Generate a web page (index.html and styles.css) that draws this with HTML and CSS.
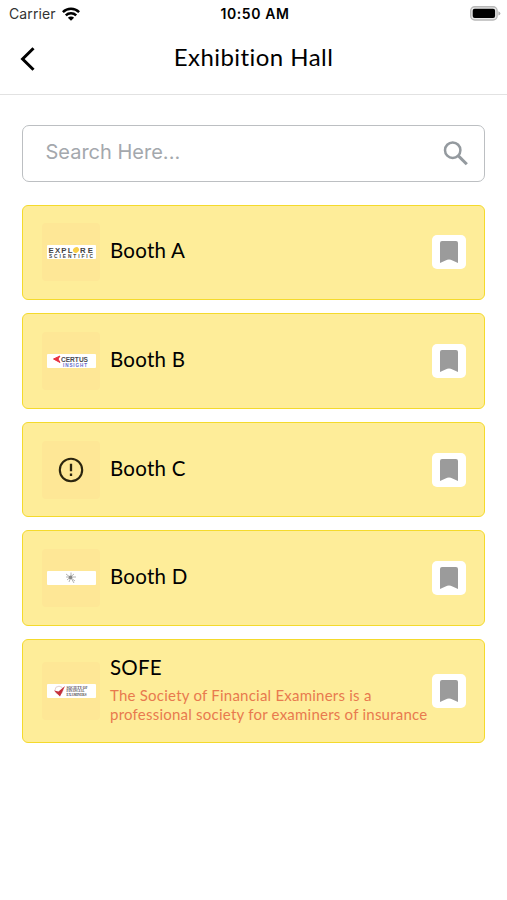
FILE: index.html
```
<!DOCTYPE html>
<html lang="en">
<head>
    <meta charset="UTF-8">
    <meta name="viewport" content="width=device-width, initial-scale=1">
    <title>Exhibition Hall</title>
    <link rel="stylesheet" href="styles.css">
</head>
<body>
<svg class="symbols" width="0" height="0">
    <symbol id="bookmark" viewBox="0 0 18 22">
        <path d="M2 0h14a2 2 0 0 1 2 2v20l-5.5-2.5q-3.500-1.800-7 0L0 22V2a2 2 0 0 1 2-2z" fill="#9b9b9b"/>
    </symbol>
</svg>
<div class="status-bar">
    <div class="carrier">
        <span>Carrier</span>
        <svg width="18" height="14" viewBox="0 0 18 14">
            <g fill="none" stroke="#000" stroke-width="2.5">
                <path d="M.9 5.1a11.6 11.6 0 0 1 16.2 0"/>
                <path d="M3.8 8.3a7.4 7.4 0 0 1 10.4 0"/>
            </g>
            <path d="M9 13.8L5.9 10.7a4.4 4.4 0 0 1 6.2 0z"/>
        </svg>
    </div>
    <span class="time">10:50 AM</span>
    <div class="battery">
        <svg width="31" height="15" viewBox="0 0 31 15">
            <rect x=".7" y=".8" width="26.4" height="13.2" rx="4" fill="#e8e8e8" stroke="#b8b8b8" stroke-width="1.4"/>
            <rect x="2.7" y="2.7" width="22.4" height="9.4" rx="2" fill="#000"/>
            <path d="M28.4 5.2q2 .8 2 2.2t-2 2.2z" fill="#b0b0b0"/>
        </svg>
    </div>
</div>
<div class="header">
    <a class="back" href="#">
        <svg width="16" height="24" viewBox="0 0 16 24">
            <path d="M13.5 1.2L2.6 12l10.9 10.8" fill="none" stroke="#000" stroke-width="3"/>
        </svg>
    </a>
    <h1>Exhibition Hall</h1>
</div>
<div class="content">
    <div class="search-box">
        <span class="text">Search Here...</span>
        <svg width="25" height="25" viewBox="0 0 25 25" fill="none" stroke="#949a9f">
            <circle cx="9.7" cy="9.2" r="7.7" stroke-width="2.5"/>
            <path d="M15.4 14.9l8.4 8.4" stroke-width="3"/>
        </svg>
    </div>
    <ul class="booth-list">
        <li class="booth">
            <div class="thumb">
                <svg width="49" height="14" viewBox="0 0 49 14">
                    <rect width="49" height="14" rx="1" fill="#fff"/>
                    <g font-family="Liberation Sans" font-weight="bold" fill="#444">
                        <text x="1.5" y="7.7" font-size="7.8" textLength="24" lengthAdjust="spacing">EXPL</text>
                        <text x="33" y="7.7" font-size="7.8" textLength="13" lengthAdjust="spacing">RE</text>
                        <text x="2" y="12.7" font-size="4.8" textLength="44" lengthAdjust="spacing">SCIENTIFIC</text>
                    </g>
                    <ellipse cx="29" cy="5" rx="3.2" ry="2.6" fill="#f8cf48" transform="rotate(-35 29 5)"/>
                </svg>
            </div>
            <div class="info"><h2>Booth A</h2></div>
            <button class="mark"><svg width="18" height="22"><use href="#bookmark"/></svg></button>
        </li>
        <li class="booth">
            <div class="thumb">
                <svg width="49" height="14" viewBox="0 0 49 14">
                    <rect width="49" height="14" rx="1" fill="#fff"/>
                    <path d="M13 2L6.500 5 13 8.500l-2-3.500z" fill="#e8303f" stroke="#e8303f"/>
                    <g font-family="Liberation Sans" font-weight="bold">
                        <text x="14" y="7.600" font-size="6.600" fill="#4a4a50" textLength="27" lengthAdjust="spacingAndGlyphs">CERTUS</text>
                        <text x="16" y="12.800" font-size="4.600" fill="#6268c8" textLength="24" lengthAdjust="spacing">INSIGHT</text>
                    </g>
                </svg>
            </div>
            <div class="info"><h2>Booth B</h2></div>
            <button class="mark"><svg width="18" height="22"><use href="#bookmark"/></svg></button>
        </li>
        <li class="booth">
            <div class="thumb">
                <svg width="26" height="26" viewBox="0 0 26 26">
                    <circle cx="13" cy="13" r="11.2" fill="none" stroke="#2b250f" stroke-width="2.1"/>
                    <path d="M13 6.8v7.4M13 16.6v2.500" stroke="#2b250f" stroke-width="2.300"/>
                </svg>
            </div>
            <div class="info"><h2>Booth C</h2></div>
            <button class="mark"><svg width="18" height="22"><use href="#bookmark"/></svg></button>
        </li>
        <li class="booth">
            <div class="thumb">
                <svg width="49" height="14" viewBox="0 0 49 14">
                    <rect width="49" height="14" rx="1" fill="#fff"/>
                    <g stroke="#aaa" stroke-width=".9">
                        <path d="M19 3l9 7M20 9l7-6M24 1.500v5M22 11l2-5M19 6h10M27 12l-3-5"/>
                        <circle cx="23.500" cy="6.400" r="1.800" fill="#888" stroke="none"/>
                    </g>
                </svg>
            </div>
            <div class="info"><h2>Booth D</h2></div>
            <button class="mark"><svg width="18" height="22"><use href="#bookmark"/></svg></button>
        </li>
        <li class="booth tall">
            <div class="thumb">
                <svg width="49" height="14" viewBox="0 0 49 14">
                    <rect width="49" height="14" rx="1" fill="#fff"/>
                    <circle cx="12" cy="6.2" r="4" fill="none" stroke="#dcc3c3" stroke-width=".8"/>
                    <path d="M7 6.500l4.500 1L18 2l-5 10.500z" fill="#c5303b"/>
                    <g font-family="Liberation Serif" font-weight="bold" font-size="4.2" fill="#49404a">
                        <text x="19.500" y="4.600" textLength="21" lengthAdjust="spacingAndGlyphs">SOCIETY OF</text>
                        <text x="19.500" y="8.400" textLength="18" lengthAdjust="spacingAndGlyphs">FINANCIAL</text>
                        <text x="19.500" y="12.200" textLength="20" lengthAdjust="spacingAndGlyphs">EXAMINERS</text>
                    </g>
                </svg>
            </div>
            <div class="info">
                <h2>SOFE</h2>
                <p>The Society of Financial Examiners is a<br>professional society for examiners of insurance</p>
            </div>
            <button class="mark"><svg width="18" height="22"><use href="#bookmark"/></svg></button>
        </li>
    </ul>
</div>
</body>
</html>
```
FILE: styles.css
```
* {
    box-sizing: border-box;
}

body {
    margin: 0;
    background: #fff;
    color: #000;
    font-family: Lato, "Liberation Sans", sans-serif;
}

svg {
    display: block;
    flex: none;
}

.symbols {
    display: none;
}

.status-bar {
    display: grid;
    grid-template-columns: 1fr auto 1fr;
    align-items: center;
    height: 27px;
    padding: 0 6px 0 9px;
    font-family: Inter, sans-serif;
    font-size: 14px;
}

.carrier {
    display: flex;
    align-items: center;
    gap: 6px;
    color: #333;
    letter-spacing: .1px;
}

.time {
    font-weight: 600;
    letter-spacing: .6px;
}

.battery {
    justify-self: end;
}

.header {
    display: grid;
    grid-template-columns: 40px 1fr 40px;
    align-items: center;
    height: 68px;
    padding: 0 20px;
    border-bottom: 1px solid #e2e2e2;
}

.header h1 {
    margin: 0;
    padding-bottom: 8px;
    font-size: 24px;
    font-weight: 400;
    line-height: 30px;
    letter-spacing: .45px;
    text-align: center;
}

.back {
    padding-bottom: 3px;
}

.content {
    padding: 30px 22px;
}

.search-box {
    display: flex;
    align-items: center;
    justify-content: space-between;
    height: 57px;
    padding: 0 16px 0 22.5px;
    border: 1px solid #bcbfc2;
    border-radius: 7px;
}

.search-box .text {
    padding-bottom: 3px;
    font-family: Inter, sans-serif;
    font-size: 20px;
    color: #a4a8ad;
}

.booth-list {
    display: flex;
    flex-direction: column;
    gap: 12.8px;
    margin: 22.5px 0 0;
    padding: 0;
    list-style: none;
}

.booth {
    display: flex;
    align-items: center;
    height: 95.8px;
    padding: 0 18px 0 19px;
    border: 1px solid #f4da2c;
    border-radius: 6px;
    background: #feed99;
}

.booth.tall {
    height: 104px;
}

.thumb {
    display: flex;
    flex: none;
    align-items: center;
    justify-content: center;
    width: 58px;
    height: 58px;
    border-radius: 4px;
    background: #fee796;
}

.info {
    flex: 1;
    padding: 0 0 4px 10px;
    white-space: nowrap;
}

.info h2 {
    margin: 0;
    font-size: 20.5px;
    font-weight: 400;
    line-height: 26px;
    letter-spacing: .25px;
}

.info p {
    margin: 6px 0 0;
    color: #e87a4e;
    font-size: 15px;
    line-height: 18.5px;
    letter-spacing: .23px;
}

.mark {
    display: flex;
    flex: none;
    align-items: center;
    justify-content: center;
    width: 34px;
    height: 34px;
    padding: 0;
    border: 0;
    border-radius: 5px;
    background: #fff;
}
```
